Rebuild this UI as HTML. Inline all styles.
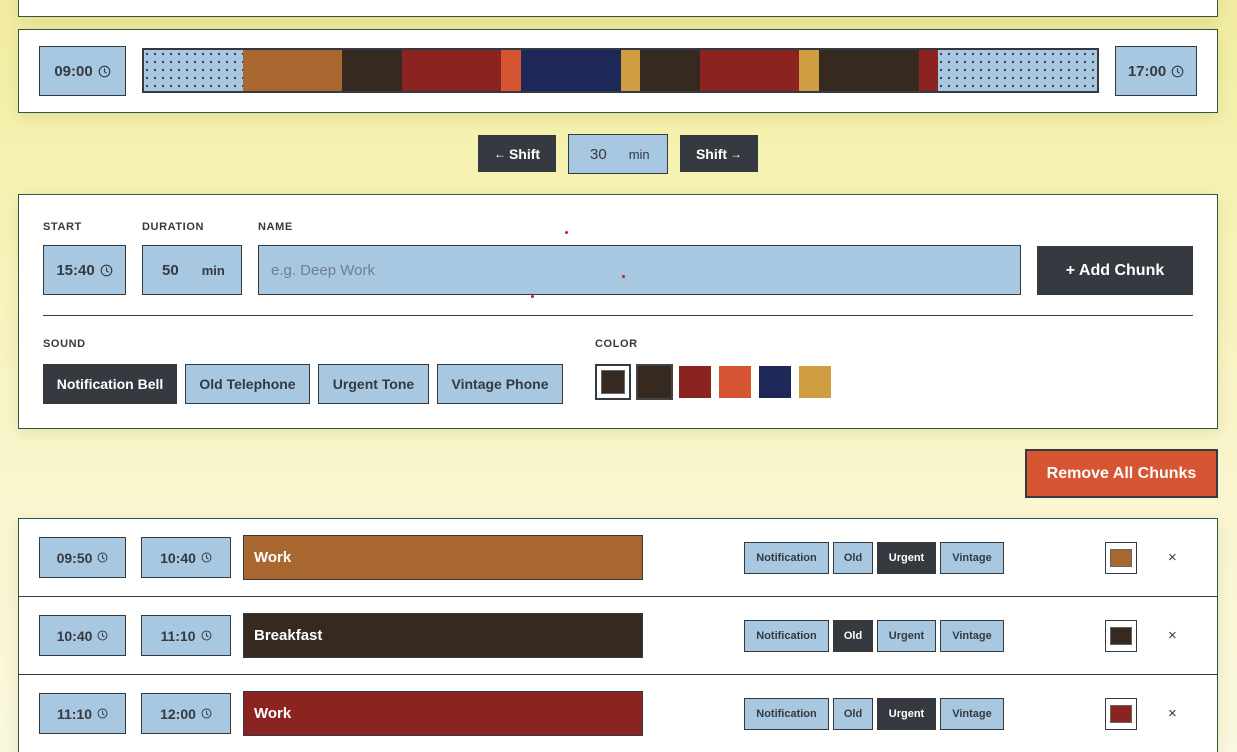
<!DOCTYPE html>
<html style="width:1237px;height:752px;overflow:hidden"><head><meta charset="utf-8">
<style>
*{box-sizing:border-box;margin:0;padding:0}
html,body{width:1237px;height:752px;overflow:hidden}
body{position:relative;font-family:"Liberation Sans",sans-serif;background:linear-gradient(180deg,#f1eca0 0%,#f6f2b4 25%,#f9f6d2 70%,#faf8df 100%);color:#343a40}
.a{position:absolute}
.card{position:absolute;left:18px;width:1200px;background:#fff;border:1px solid #2d5a3a;box-shadow:0 4px 14px rgba(150,140,60,.18)}
.inp{position:absolute;background:#a8c8e1;border:1px solid #343a40;display:flex;align-items:center;justify-content:center;color:#343a40;font-weight:bold}
.dark{position:absolute;background:#343a40;color:#fff;font-weight:bold;display:flex;align-items:center;justify-content:center}
.clk{display:inline-block;margin-left:5px;vertical-align:middle}
.lbl{position:absolute;font-size:11px;font-weight:bold;letter-spacing:.6px;color:#343a40}
.seg{position:absolute;top:0;height:40px}
.dots{background-color:#a8c8e1;background-image:radial-gradient(circle,#343a40 1px,transparent 1.3px);background-size:8px 8px;background-position:-1px 0}
.sb{position:absolute;height:32px;border:1px solid #343a40;background:#a8c8e1;font-size:11px;font-weight:bold;display:flex;align-items:center;justify-content:center;color:#343a40}
.sb.on{background:#343a40;color:#fff}
.nm{position:absolute;left:243px;width:400px;height:45px;border:1px solid #343a40;color:#fff;font-weight:bold;font-size:15px;padding-left:10px;display:flex;align-items:center}
.x{position:absolute;left:1168px;font-size:15px;color:#343a40}
.m{font-weight:600}
</style></head><body>
<svg width="0" height="0" style="position:absolute"><defs>
<symbol id="c" viewBox="0 0 16 16"><circle cx="8" cy="8" r="6.5" fill="none" stroke="#343a40" stroke-width="1.4"/><path d="M8 4.5V8.3l2.3 1.6" fill="none" stroke="#343a40" stroke-width="1.4" stroke-linecap="round"/></symbol>
</defs></svg>

<div class="card" style="top:-10px;height:27px"></div>

<div class="card" style="top:29px;height:84px"></div>
<div class="inp" style="left:39px;top:46px;width:87px;height:50px;font-size:15px">09:00<svg class="clk" width="13" height="13"><use href="#c"/></svg></div>
<div class="a" style="left:142px;top:48px;width:957px;height:45px;border:2px solid #343a40;background:#343a40">
<div style="position:relative;width:953px;height:41px;overflow:hidden">
<div class="seg dots" style="left:0;width:99px;height:41px"></div>
<div class="seg" style="left:99px;width:99px;height:41px;background:#a8672e"></div>
<div class="seg" style="left:198px;width:60px;height:41px;background:#352920"></div>
<div class="seg" style="left:258px;width:99px;height:41px;background:#8b2320"></div>
<div class="seg" style="left:357px;width:20px;height:41px;background:#d65532"></div>
<div class="seg" style="left:377px;width:100px;height:41px;background:#1e2858"></div>
<div class="seg" style="left:477px;width:19px;height:41px;background:#d09e42"></div>
<div class="seg" style="left:496px;width:60px;height:41px;background:#352920"></div>
<div class="seg" style="left:556px;width:99px;height:41px;background:#8b2320"></div>
<div class="seg" style="left:655px;width:20px;height:41px;background:#d09e42"></div>
<div class="seg" style="left:675px;width:100px;height:41px;background:#352920"></div>
<div class="seg" style="left:775px;width:19px;height:41px;background:#8b2320"></div>
<div class="seg dots" style="left:794px;width:159px;height:41px"></div>
</div></div>
<div class="inp" style="left:1115px;top:46px;width:82px;height:50px;font-size:15px">17:00<svg class="clk" width="13" height="13"><use href="#c"/></svg></div>

<div class="dark" style="left:478px;top:135px;width:78px;height:37px;font-size:14px"><span style="font-size:12px;margin-right:3px">←</span>Shift</div>
<div class="inp" style="left:568px;top:134px;width:100px;height:40px;font-size:15px;justify-content:flex-start;font-weight:normal"><span style="margin-left:21px">30</span><span style="margin-left:22px;font-size:13px">min</span></div>
<div class="dark" style="left:680px;top:135px;width:78px;height:37px;font-size:14px">Shift<span style="font-size:12px;margin-left:3px">→</span></div>

<div class="card" style="top:194px;height:235px"></div>
<div class="lbl" style="left:43px;top:221px">START</div>
<div class="lbl" style="left:142px;top:221px">DURATION</div>
<div class="lbl" style="left:258px;top:221px">NAME</div>
<div class="inp m" style="left:43px;top:245px;width:83px;height:50px;font-size:15px">15:40<svg class="clk" width="13" height="13"><use href="#c"/></svg></div>
<div class="inp m" style="left:142px;top:245px;width:100px;height:50px;font-size:15px;justify-content:flex-start"><span style="margin-left:19px">50</span><span style="margin-left:23px;font-size:13px">min</span></div>
<div class="inp" style="left:258px;top:245px;width:763px;height:50px;justify-content:flex-start;font-size:15px;font-weight:normal;color:#6f7f8e;padding-left:12px">e.g. Deep Work</div>
<div class="a" style="left:565px;top:231px;width:3px;height:3px;border-radius:50%;background:#e0141e"></div>
<div class="a" style="left:622px;top:275px;width:3px;height:3px;border-radius:50%;background:#e0141e"></div>
<div class="a" style="left:531px;top:295px;width:3px;height:3px;border-radius:50%;background:#e0141e"></div>
<div class="dark" style="left:1037px;top:246px;width:156px;height:49px;font-size:16px">+ Add Chunk</div>
<div class="a" style="left:43px;top:315px;width:1150px;height:1px;background:#343a40"></div>
<div class="lbl" style="left:43px;top:338px">SOUND</div>
<div class="lbl" style="left:595px;top:338px">COLOR</div>
<div class="dark" style="left:43px;top:364px;width:134px;height:40px;font-size:14px">Notification Bell</div>
<div class="inp m" style="left:185px;top:364px;width:125px;height:40px;font-size:14px">Old Telephone</div>
<div class="inp m" style="left:318px;top:364px;width:111px;height:40px;font-size:14px">Urgent Tone</div>
<div class="inp m" style="left:437px;top:364px;width:126px;height:40px;font-size:14px">Vintage Phone</div>
<div class="a" style="left:595px;top:364px;width:36px;height:36px;border:2px solid #343a40;background:#fff"><div style="margin:4px;width:24px;height:24px;background:#352920;border:1px solid #666"></div></div>
<div class="a" style="left:636px;top:364px;width:37px;height:36px;border:2px solid #444;background:#352920"></div>
<div class="a" style="left:679px;top:366px;width:32px;height:32px;background:#8b2320"></div>
<div class="a" style="left:719px;top:366px;width:32px;height:32px;background:#d65532"></div>
<div class="a" style="left:759px;top:366px;width:32px;height:32px;background:#1e2858"></div>
<div class="a" style="left:799px;top:366px;width:32px;height:32px;background:#d09e42"></div>

<div class="a" style="left:1025px;top:449px;width:193px;height:49px;background:#d65532;border:2px solid #343a40;color:#fff;font-weight:bold;font-size:16px;display:flex;align-items:center;justify-content:center">Remove All Chunks</div>

<div class="card" style="top:518px;height:240px"></div>
<div class="a" style="left:18px;top:596px;width:1200px;height:1px;background:#343a40"></div>
<div class="a" style="left:18px;top:674px;width:1200px;height:1px;background:#343a40"></div>

<!-- row 1 -->
<div class="inp m" style="left:39px;top:537px;width:87px;height:41px;font-size:14px">09:50<svg class="clk" width="11" height="11"><use href="#c"/></svg></div>
<div class="inp m" style="left:141px;top:537px;width:90px;height:41px;font-size:14px">10:40<svg class="clk" width="11" height="11"><use href="#c"/></svg></div>
<div class="nm" style="top:535px;background:#a8672e">Work</div>
<div class="sb" style="left:744px;top:542px;width:85px">Notification</div>
<div class="sb" style="left:833px;top:542px;width:40px">Old</div>
<div class="sb on" style="left:877px;top:542px;width:59px">Urgent</div>
<div class="sb" style="left:940px;top:542px;width:64px">Vintage</div>
<div class="a" style="left:1105px;top:542px;width:32px;height:32px;border:1px solid #343a40;background:#fff"><div style="margin:6px 4px;width:22px;height:18px;background:#a8672e;border:1px solid #666"></div></div>
<div class="x" style="top:549px">×</div>

<!-- row 2 -->
<div class="inp m" style="left:39px;top:615px;width:87px;height:41px;font-size:14px">10:40<svg class="clk" width="11" height="11"><use href="#c"/></svg></div>
<div class="inp m" style="left:141px;top:615px;width:90px;height:41px;font-size:14px">11:10<svg class="clk" width="11" height="11"><use href="#c"/></svg></div>
<div class="nm" style="top:613px;background:#352920">Breakfast</div>
<div class="sb" style="left:744px;top:620px;width:85px">Notification</div>
<div class="sb on" style="left:833px;top:620px;width:40px">Old</div>
<div class="sb" style="left:877px;top:620px;width:59px">Urgent</div>
<div class="sb" style="left:940px;top:620px;width:64px">Vintage</div>
<div class="a" style="left:1105px;top:620px;width:32px;height:32px;border:1px solid #343a40;background:#fff"><div style="margin:6px 4px;width:22px;height:18px;background:#352920;border:1px solid #666"></div></div>
<div class="x" style="top:627px">×</div>

<!-- row 3 -->
<div class="inp m" style="left:39px;top:693px;width:87px;height:41px;font-size:14px">11:10<svg class="clk" width="11" height="11"><use href="#c"/></svg></div>
<div class="inp m" style="left:141px;top:693px;width:90px;height:41px;font-size:14px">12:00<svg class="clk" width="11" height="11"><use href="#c"/></svg></div>
<div class="nm" style="top:691px;background:#8b2320">Work</div>
<div class="sb" style="left:744px;top:698px;width:85px">Notification</div>
<div class="sb" style="left:833px;top:698px;width:40px">Old</div>
<div class="sb on" style="left:877px;top:698px;width:59px">Urgent</div>
<div class="sb" style="left:940px;top:698px;width:64px">Vintage</div>
<div class="a" style="left:1105px;top:698px;width:32px;height:32px;border:1px solid #343a40;background:#fff"><div style="margin:6px 4px;width:22px;height:18px;background:#8b2320;border:1px solid #666"></div></div>
<div class="x" style="top:705px">×</div>
</body></html>
